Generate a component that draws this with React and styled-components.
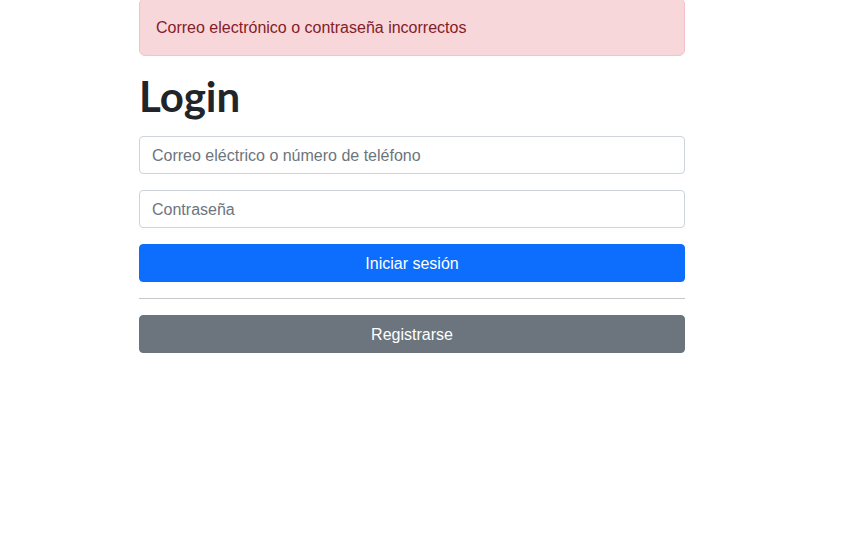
import styled, { createGlobalStyle } from "styled-components";

const GlobalStyle = createGlobalStyle`
  * { box-sizing: border-box; }
  body {
    margin: 0;
    background: #fff;
    color: #212529;
    font-family: "Liberation Sans", Arial, sans-serif;
    font-size: 16px;
    line-height: 1.5;
  }
`;

const Page = styled.div`
  width: 546px;
  margin: -2px 0 0 139px;
`;

const Alert = styled.div`
  padding: 17px 16px 15px;
  margin-bottom: 16px;
  border: 1px solid #f5c2c7;
  border-radius: 6px;
  background: #f8d7da;
  color: #842029;
`;

const Title = styled.h1`
  margin: 0 0 16px;
  padding-top: 1px;
  height: 48px;
  font-family: Lato, "Liberation Sans", sans-serif;
  font-size: 42px;
  font-weight: 700;
  line-height: 1.1;
  color: #212529;
`;

const Form = styled.form`
  display: flex;
  flex-direction: column;
  gap: 16px;
`;

const Input = styled.input`
  display: block;
  width: 100%;
  height: 38px;
  padding: 7px 12px 5px;
  font: inherit;
  color: #212529;
  background: #fff;
  border: 1px solid #ced4da;
  border-radius: 4px;
  outline: none;

  &::placeholder {
    color: #6c757d;
  }
`;

const Button = styled.button`
  display: block;
  width: 100%;
  height: 38px;
  padding: 7px 12px 5px;
  font: inherit;
  color: #fff;
  background: ${(p) => (p.$variant === "secondary" ? "#6c757d" : "#0d6efd")};
  border: 1px solid ${(p) => (p.$variant === "secondary" ? "#6c757d" : "#0d6efd")};
  border-radius: 4px;
  cursor: pointer;
`;

const Divider = styled.hr`
  margin: 0;
  border: 0;
  border-top: 1px solid #c8c9ca;
`;

export default function App() {
  return (
    <>
      <GlobalStyle />
      <Page>
        <Alert>Correo electrónico o contraseña incorrectos</Alert>
        <Title>Login</Title>
        <Form onSubmit={(e) => e.preventDefault()}>
          <Input type="text" placeholder="Correo eléctrico o número de teléfono" />
          <Input type="password" placeholder="Contraseña" />
          <Button type="submit">Iniciar sesión</Button>
          <Divider />
          <Button type="button" $variant="secondary">
            Registrarse
          </Button>
        </Form>
      </Page>
    </>
  );
}
